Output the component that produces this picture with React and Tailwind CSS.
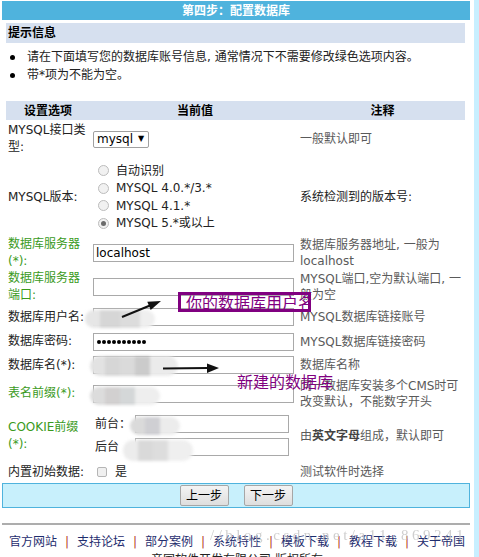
import React from "react";

const FONT = "font-['DejaVu_Sans','Noto_Sans_CJK_SC',sans-serif]";

function Row({ h, label, green, children, note, noteDark }) {
  return (
    <div className={`flex items-center ${h}`}>
      <div
        className={`w-[84px] shrink-0 pl-[2px] leading-[17px] ${
          green ? "text-[#3a9a1c]" : "text-[#222]"
        }`}
      >
        {label}
      </div>
      <div className="w-[210px] shrink-0 relative self-stretch flex items-center">
        {children}
      </div>
      <div
        className={`w-[165px] shrink-0 leading-[16px] ${
          noteDark ? "text-[#222]" : "text-[#5a5a5a]"
        }`}
      >
        {note}
      </div>
    </div>
  );
}

function Input({ children }) {
  return (
    <div className="ml-[3px] w-[201px] h-[18px] border border-[#a9a9a9] bg-white flex items-center px-[2px] text-[12px] text-black">
      {children}
    </div>
  );
}

function Radio({ checked, label }) {
  return (
    <div className="h-[17.5px] flex items-center">
      <span className="w-[11px] h-[11px] rounded-full border border-[#bcbcbc] bg-[#f1f1f1] flex items-center justify-center">
        {checked && <span className="w-[5px] h-[5px] rounded-full bg-[#6b6b6b]" />}
      </span>
      <span className="ml-[7px] text-[#222]">{label}</span>
    </div>
  );
}

function Btn({ children }) {
  return (
    <div className="w-[49px] h-[21px] border border-[#a6a6a6] rounded-[2px] bg-gradient-to-b from-[#f4f4f4] to-[#dedede] flex items-center justify-center text-[12px] text-black">
      {children}
    </div>
  );
}

function Sep() {
  return <span className="w-[20px] text-center text-[#b53a2a]">|</span>;
}

export default function App() {
  return (
    <div className={`flex min-h-[557px] w-[479px] bg-white text-[12px] ${FONT}`}>
      <div className="w-[474px] shrink-0 relative overflow-hidden h-[557px]">
        {/* Title bar */}
        <div className="mt-[1px] ml-[2px] w-[468px] h-[19px] bg-[#4fb3dd] text-white font-bold flex items-center justify-center leading-none">
          第四步：配置数据库
        </div>

        {/* tip header */}
        <div className="mt-[3px] ml-[6px] w-[459px] h-[20px] bg-[#d6e0ef] font-bold pl-[2px] flex items-center text-black">
          提示信息
        </div>

        <div className="mt-[5px] ml-[6px] text-[#222]">
          <div className="h-[18px] flex items-center pl-[4px]">
            <span className="w-[5px] h-[5px] rounded-full bg-black" />
            <span className="ml-[12px]">请在下面填写您的数据库账号信息, 通常情况下不需要修改绿色选项内容。</span>
          </div>
          <div className="h-[18px] flex items-center pl-[4px]">
            <span className="w-[5px] h-[5px] rounded-full bg-black" />
            <span className="ml-[12px]">带*项为不能为空。</span>
          </div>
        </div>

        {/* Table */}
        <div className="mt-[17px] ml-[6px] w-[459px]">
          <div className="h-[19px] bg-[#d6e0ef] flex items-center font-bold text-black">
            <div className="w-[84px] text-center">设置选项</div>
            <div className="w-[210px] text-center">当前值</div>
            <div className="w-[165px] text-center">注释</div>
          </div>

          <Row h="h-[38px]" label="MYSQL接口类型:" note="一般默认即可">
            <div className="ml-[3px] w-[56px] h-[17px] border border-[#a0a0a0] rounded-[2px] flex items-center pl-[3px] text-black">
              <span>mysql</span>
              <span className="ml-[5px] text-[8px] leading-none">▼</span>
            </div>
          </Row>

          <Row h="h-[78px]" label="MYSQL版本:" note="系统检测到的版本号:" noteDark>
            <div className="pl-[8px] flex flex-col">
              <Radio label="自动识别" />
              <Radio label="MYSQL 4.0.*/3.*" />
              <Radio label="MYSQL 4.1.*" />
              <Radio checked label="MYSQL 5.*或以上" />
            </div>
          </Row>

          <Row
            h="h-[34px]"
            green
            label="数据库服务器(*):"
            note="数据库服务器地址, 一般为localhost"
          >
            <Input>localhost</Input>
          </Row>

          <Row
            h="h-[34px]"
            green
            label="数据库服务器端口:"
            note="MYSQL端口,空为默认端口, 一般为空"
          >
            <Input />
          </Row>

          <Row h="h-[26px]" label="数据库用户名:" note="MYSQL数据库链接账号">
            <Input />
            <div className="absolute left-[-5px] top-[6px] w-[70px] h-[18px] flex overflow-hidden rounded-[9px] blur-[1.5px]">
              <div className="w-[15px] bg-[#e6e6e6]" />
              <div className="w-[20px] bg-[#d6d6d6]" />
              <div className="w-[20px] bg-[#dcdcdc]" />
              <div className="w-[15px] bg-[#efefef]" />
            </div>
          </Row>

          <Row h="h-[23px]" label="数据库密码:" note="MYSQL数据库链接密码">
            <Input>
              <div className="flex gap-[1px] pl-[1px]">
                {Array.from({ length: 10 }).map((_, i) => (
                  <span key={i} className="w-[4px] h-[4px] rounded-full bg-black" />
                ))}
              </div>
            </Input>
          </Row>

          <Row h="h-[24px]" label="数据库名(*):" note="数据库名称">
            <Input />
            <div className="absolute left-0 top-[3px] w-[88px] h-[20px] flex overflow-hidden rounded-[10px] blur-[1.5px]">
              <div className="w-[15px] bg-[#e2e2e2]" />
              <div className="w-[15px] bg-[#d6d6d6]" />
              <div className="w-[15px] bg-[#dadada]" />
              <div className="w-[15px] bg-[#cbcbcb]" />
              <div className="w-[28px] bg-[#ebebeb]" />
            </div>
          </Row>

          <Row
            h="h-[33px]"
            green
            label="表名前缀(*):"
            note="同一数据库安装多个CMS时可改变默认，不能数字开头"
          >
            <Input />
            <div className="absolute left-0 top-[10px] w-[70px] h-[18px] flex overflow-hidden rounded-[9px] blur-[1.5px]">
              <div className="w-[15px] bg-[#dcdcdc]" />
              <div className="w-[15px] bg-[#d2d0d0]" />
              <div className="w-[15px] bg-[#d4d7d8]" />
              <div className="w-[25px] bg-[#eeeeee]" />
            </div>
          </Row>

          <Row
            h="h-[51px]"
            green
            label="COOKIE前缀(*):"
            note={
              <span>
                由<b className="text-[#444]">英文字母</b>组成，默认即可
              </span>
            }
          >
            <div className="flex flex-col gap-[5px] pl-[5px] text-[#222]">
              <div className="flex items-center h-[18px]">
                <span className="w-[40px]">前台：</span>
                <div className="w-[154px] h-[18px] border border-[#a9a9a9]" />
              </div>
              <div className="flex items-center h-[18px]">
                <span className="w-[40px]">后台</span>
                <div className="w-[154px] h-[18px] border border-[#a9a9a9]" />
              </div>
            </div>
            <div className="absolute left-[40px] top-[7px] w-[50px] h-[18px] flex overflow-hidden rounded-[9px] blur-[1.5px]">
              <div className="w-[15px] bg-[#dadada]" />
              <div className="w-[15px] bg-[#cfcfd3]" />
              <div className="w-[20px] bg-[#ececec]" />
            </div>
            <div className="absolute left-[33px] top-[30px] w-[70px] h-[21px] flex overflow-hidden rounded-[10px] blur-[1.5px]">
              <div className="w-[15px] bg-[#ececec]" />
              <div className="w-[15px] bg-[#d9d9d9]" />
              <div className="w-[15px] bg-[#dddddd]" />
              <div className="w-[25px] bg-[#efefef]" />
            </div>
          </Row>

          <Row h="h-[22px]" label="内置初始数据:" note="测试软件时选择">
            <div className="pl-[7px] flex items-center">
              <span className="w-[10px] h-[10px] rounded-[2px] border border-[#b5b5b5] bg-[#f0f0f0]" />
              <span className="ml-[8px] text-[#222]">是</span>
            </div>
          </Row>
        </div>

        {/* Button bar */}
        <div className="ml-[2px] w-[468px] h-[25px] border border-[#4fb3dd] bg-[#c8f0fc] flex items-center justify-center gap-[15px]">
          <Btn>上一步</Btn>
          <Btn>下一步</Btn>
        </div>

        <div className="mt-[15px] ml-[2px] w-[468px] h-[2px] bg-[#adadad]" />

        <div className="mt-[8px] flex justify-center leading-[18px] text-[#1f2d6e]">
          <span>官方网站</span>
          <Sep />
          <span>支持论坛</span>
          <Sep />
          <span>部分案例</span>
          <Sep />
          <span>系统特性</span>
          <Sep />
          <span>模板下载</span>
          <Sep />
          <span>教程下载</span>
          <Sep />
          <span>关于帝国</span>
        </div>
        <div className="flex justify-center leading-[18px] text-[#222]">帝国软件开发有限公司 版权所有</div>

        {/* Watermark */}
        <div className="absolute left-[210px] top-[524px] font-['Liberation_Serif',serif] text-[15px] tracking-[3.5px] text-[#c4c4c4] opacity-80 whitespace-nowrap pointer-events-none">
          //blog.csdn.net/a11_869241
        </div>

        {/* Annotations */}
        <div className="absolute left-[178px] top-[292px] w-[133px] h-[20px] border-[3px] border-[#800080] overflow-hidden">
          <div className="pl-[5px] text-[16px] leading-[14px] text-[#800080] whitespace-nowrap font-['Noto_Sans_CJK_SC',sans-serif]">
            你的数据库用户名
          </div>
        </div>
        <div className="absolute left-[237px] top-[372px] text-[16px] leading-[18px] text-[#800080] whitespace-nowrap font-['Noto_Sans_CJK_SC',sans-serif]">
          新建的数据库
        </div>
        <svg
          className="absolute left-0 top-0 pointer-events-none"
          width="474"
          height="557"
          viewBox="0 0 474 557"
        >
          <line x1="122" y1="317" x2="150" y2="305.5" stroke="#111" strokeWidth="2" />
          <polygon points="161,301 150.7,310.1 147.3,301.7" fill="#111" />
          <line x1="163" y1="368.5" x2="208" y2="368" stroke="#111" strokeWidth="2" />
          <polygon points="219,368 207,363.5 207,373" fill="#111" />
        </svg>
      </div>
      <div className="w-[5px] shrink-0 bg-[#c8efff]" />
    </div>
  );
}
